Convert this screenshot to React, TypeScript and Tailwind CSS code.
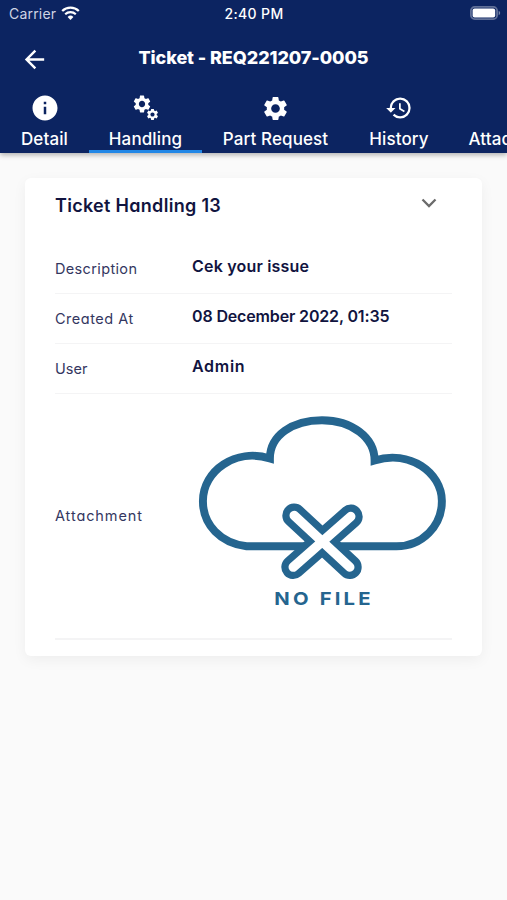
import type { ReactNode } from "react"
import { MdArrowBack, MdHistory, MdInfo, MdSettings, MdAttachFile } from "react-icons/md"

type Tab = {
  label: string
  width: string
  icon: ReactNode
  active?: boolean
}

type RowProps = {
  label: string
  labelClass: string
  children: ReactNode
  className: string
}

function WifiIcon() {
  return (
    <svg className="mb-[2px] h-[14px] w-[19px]" viewBox="0 0 19 14" fill="none" stroke="white">
      <path d="M1.2 5a12 12 0 0 1 16.6 0" strokeWidth="2.3" />
      <path d="M4.2 8.3a7.7 7.7 0 0 1 10.6 0" strokeWidth="2.2" />
      <path d="M6.6 10.9a4.2 4.2 0 0 1 5.8 0L9.5 14z" fill="white" stroke="none" />
    </svg>
  )
}

function BatteryIcon() {
  return (
    <svg className="mb-[1px] h-[14px] w-[31px]" viewBox="0 0 31 14">
      <rect x=".9" y=".9" width="26.2" height="12.2" rx="3.8" fill="none" stroke="white" strokeOpacity=".35" strokeWidth="1.8" />
      <rect x="2.6" y="2.4" width="22.6" height="9.2" rx="2" fill="white" />
      <path d="M28.7 4.8c2 .8 2 3.6 0 4.4z" fill="white" fillOpacity=".45" />
    </svg>
  )
}

function CogsIcon() {
  return (
    <svg className="size-[26px]" viewBox="0 0 26 26">
      <MdSettings x="-1.5" y="-1.5" size={21} />
      <MdSettings x="12.5" y="12.5" size={14} />
    </svg>
  )
}

function NoFileImage() {
  return (
    <svg className="mb-[2px] h-[230px] w-[262px]" viewBox="191 400 262 230" fill="none" stroke="#25658f">
      <path
        d="M246 546.500C220 543.500 202 525 202 501C202 470 235 447.500 269.500 458C269.500 435 292 419.500 322 419.500C352 419.500 375 437 375 460C410 449 442.800 472 442.800 501C442.800 526 423 546.500 397 546.500Z"
        strokeWidth="8"
      />
      <path d="M294 515.500L350 567.500M351 516.500L293 567.500" strokeWidth="24" strokeLinecap="round" />
      <path d="M294 515.500L350 567.500M351 516.500L293 567.500" stroke="white" strokeWidth="9.500" strokeLinecap="round" />
      <text
        x="274"
        y="606"
        textLength="100"
        lengthAdjust="spacingAndGlyphs"
        fill="#25658f"
        stroke="none"
        className="font-['Inter',sans-serif] text-[18px] font-bold tracking-[2.8px]"
      >
        NO FILE
      </text>
    </svg>
  )
}

const tabs: Tab[] = [
  { label: "Detail", width: "w-[89px]", icon: <MdInfo size={30} /> },
  { label: "Handling", width: "w-[113px]", icon: <CogsIcon />, active: true },
  { label: "Part Request", width: "w-[147px]", icon: <MdSettings size={29} /> },
  { label: "History", width: "w-[100px]", icon: <MdHistory size={28} /> },
  { label: "Attachment", width: "w-[134px]", icon: <MdAttachFile size={28} /> },
]

function Row({ label, labelClass, children, className }: RowProps) {
  return (
    <div className={`flex items-center border-b border-[#f4f4f5] ${className}`}>
      <div className={`w-[137px] shrink-0 text-[14.5px] text-[#34375f] ${labelClass}`}>{label}</div>
      {children}
    </div>
  )
}

function App() {
  return (
    <div className="h-[900px] w-[507px] overflow-hidden bg-[#fafafa] font-['Inter',sans-serif] text-[#11143f] [font-feature-settings:'cv11']">
      <header className="relative h-[153px] overflow-hidden bg-[#0c2461] text-white shadow-[0_2px_5px_rgba(0,0,0,0.3)]">
        <div className="grid h-[27px] grid-cols-3 items-center pr-[6px] pl-[9px] text-[14px] [font-feature-settings:normal]">
          <div className="flex items-center gap-[5px] tracking-[0.2px] text-[#cfd4e4]">
            Carrier
            <WifiIcon />
          </div>
          <div className="pr-[2px] text-center font-medium tracking-[0.35px]">2:40 PM</div>
          <div className="flex justify-end">
            <BatteryIcon />
          </div>
        </div>

        <div className="grid h-[64px] grid-cols-[60px_1fr_60px] items-center">
          <MdArrowBack size={29} className="ml-[20px]" />
          <h1 className="pb-[3px] text-center text-[18px] font-extrabold tracking-[-0.08px]">
            Ticket - REQ221207-0005
          </h1>
        </div>

        <nav className="flex h-[62px] w-[583px] [font-feature-settings:normal]">
          {tabs.map((tab) => (
            <button
              key={tab.label}
              className={`flex shrink-0 flex-col items-center border-b-[3px] ${tab.width} ${
                tab.active ? "border-[#2187e6]" : "border-transparent"
              }`}
            >
              <span className="flex h-[34px] shrink-0 items-center">{tab.icon}</span>
              <span className="pt-[2px] text-[17px] leading-[25px] font-medium tracking-[0.12px]">{tab.label}</span>
            </button>
          ))}
        </nav>
      </header>

      <main className="pt-[25px] pl-[25px]">
        <section className="h-[478px] w-[457px] rounded-md bg-white px-[30px] shadow-[0_4px_14px_rgba(0,20,20,0.05)]">
          <div className="flex h-[66px] justify-between pt-[14px]">
            <h2 className="text-[18px] leading-7 font-semibold tracking-[0.3px]">Ticket Handling 13</h2>
            <svg className="mt-[6px] mr-[15px] h-[10px] w-[16px]" viewBox="0 0 16 10" fill="none" stroke="#6b6b6b" strokeWidth="2.3">
              <path d="M1.500 1.500L8 8l6.500-6.500" />
            </svg>
          </div>
          <Row label="Description" labelClass="tracking-[0.35px]" className="h-[50px]">
            <strong className="pb-[5px] text-[16px] font-semibold tracking-[0.2px]">Cek your issue</strong>
          </Row>
          <Row label="Created At" labelClass="tracking-[0.5px]" className="h-[50px]">
            <strong className="pb-[5px] text-[16px] font-semibold tracking-[-0.15px]">
              08 December 2022, 01:35
            </strong>
          </Row>
          <Row label="User" labelClass="" className="h-[50px]">
            <strong className="pb-[5px] text-[16px] font-semibold tracking-[0.7px]">Admin</strong>
          </Row>
          <Row label="Attachment" labelClass="tracking-[0.9px]" className="h-[246px] border-b-2">
            <NoFileImage />
          </Row>
        </section>
      </main>
    </div>
  )
}

export default App
